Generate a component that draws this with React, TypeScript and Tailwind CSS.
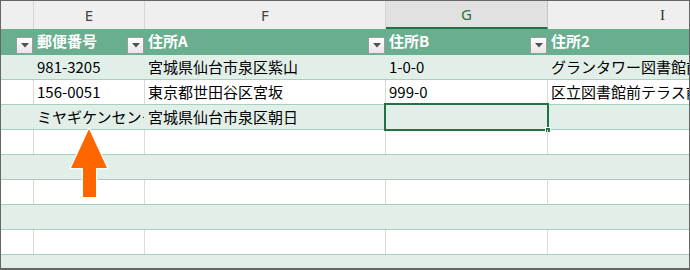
const cols = "grid grid-cols-[33px_111px_241px_162px_1fr]";
const jp = "font-['Noto_Sans_CJK_JP','Noto_Sans',sans-serif]";

function FilterButton() {
  return (
    <div className="absolute right-[1px] bottom-[1px] w-[17px] h-[17px] border border-[#9c9c9c] bg-gradient-to-b from-white to-[#e6e6e6] flex items-center justify-center">
      <svg width="8" height="5" viewBox="0 0 8 5">
        <polygon points="0,0 8,0 4,4.5" fill="#505050" />
      </svg>
    </div>
  );
}

type Row = [string, string, string, string];

const rows: Row[] = [
  ["981-3205", "宮城県仙台市泉区紫山", "1-0-0", "グランタワー図書館前"],
  ["156-0051", "東京都世田谷区宮坂", "999-0", "区立図書館前テラス前"],
  ["ミヤギケンセンター", "宮城県仙台市泉区朝日", "", ""],
  ["", "", "", ""],
  ["", "", "", ""],
  ["", "", "", ""],
  ["", "", "", ""],
  ["", "", "", ""],
  ["", "", "", ""],
];

export default function App() {
  return (
    <div className={`relative w-[690px] h-[270px] overflow-hidden bg-white border-t border-l border-r border-b-2 border-[#666666] ${jp}`}>
      {/* column letters */}
      <div className={`${cols} h-[28px] bg-[#efefef] text-[15px] text-[#444]`}>
        <div className="border-r border-[#d6d6d6]" />
        <div className="border-r border-[#d6d6d6] flex items-center justify-center font-['Noto_Sans',sans-serif]">E</div>
        <div className="border-r border-[#d6d6d6] flex items-center justify-center font-['Noto_Sans',sans-serif]">F</div>
        <div className="border-r border-[#c4c4c4] border-b-2 border-b-[#217346] bg-[#e1e1e1] flex items-center justify-center text-[#217346] font-['Noto_Sans',sans-serif]">
          G
        </div>
        <div className="flex items-center justify-start pl-[112px] font-['Liberation_Serif',serif] text-[#333]">I</div>
      </div>

      {/* table header */}
      <div className={`${cols} h-[26px] bg-[#68ae8f] text-white font-bold text-[15px]`}>
        <div className="relative">
          <FilterButton />
        </div>
        <div className="relative flex items-center pl-[3px] pb-[1px]">
          郵便番号
          <FilterButton />
        </div>
        <div className="relative flex items-center pl-[3px] pb-[1px]">
          住所A
          <FilterButton />
        </div>
        <div className="relative flex items-center pl-[3px] pb-[1px]">
          住所B
          <FilterButton />
        </div>
        <div className="flex items-center pl-[3px] pb-[1px]">住所2</div>
      </div>

      {/* data rows */}
      {rows.map((r, i) => {
        const band = i % 2 === 0;
        const line = band ? "border-r border-transparent" : "border-r border-[#dadada]";
        return (
          <div
            key={i}
            className={`${cols} h-[25px] border-b border-[#a6cfbc] text-[15px] text-black ${band ? "bg-[#e2efe9]" : "bg-white"}`}
          >
            <div className={line} />
            <div className={`${line} overflow-hidden whitespace-nowrap pl-[3px] leading-[24px]`}>{r[0]}</div>
            <div className={`${line} overflow-hidden whitespace-nowrap pl-[3px] leading-[24px]`}>{r[1]}</div>
            <div className={`${line} relative whitespace-nowrap pl-[3px] leading-[24px]`}>
              {r[2]}
              {i === 2 && (
                <div className="absolute -left-[2px] -top-[2px] -right-[2px] -bottom-[2px] border-2 border-[#217346]">
                  <div className="absolute -right-[4px] -bottom-[4px] w-[6px] h-[6px] bg-[#217346] border border-white" />
                </div>
              )}
            </div>
            <div className="overflow-hidden whitespace-nowrap pl-[3px] leading-[24px]">{r[3]}</div>
          </div>
        );
      })}

      {/* up arrow */}
      <svg className="absolute left-[65px] top-[123px]" width="46" height="76" viewBox="0 0 46 76">
        <polygon
          points="23,5 5,44 17,44 17,73 30,73 30,44 41,44"
          fill="#ff6600"
          stroke="white"
          strokeWidth="2.5"
          strokeLinejoin="round"
          paintOrder="stroke"
        />
      </svg>
    </div>
  );
}
